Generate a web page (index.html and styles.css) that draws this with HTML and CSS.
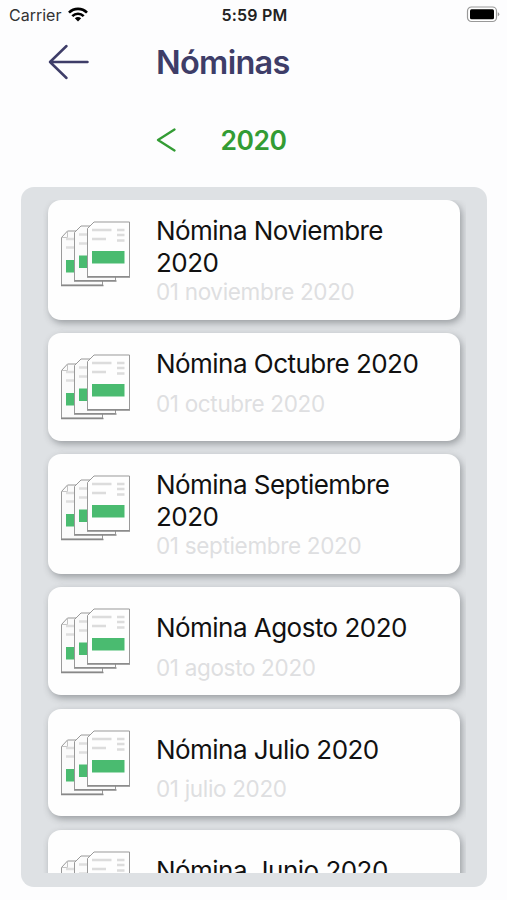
FILE: index.html
```html
<!DOCTYPE html>
<html lang="es">
<head>
<meta charset="utf-8">
<title>Nóminas</title>
<link rel="stylesheet" href="styles.css">
</head>
<body>
<svg class="defs" aria-hidden="true">
  <symbol id="papers" viewBox="0 0 72 70">
    <path d="M1.500 17.500 L7.500 11 H42.500 V65 H1.500 Z" fill="#fbfbfb" stroke="#999"/>
    <path d="M2 17.500 H7.500 V12" fill="none" stroke="#c4c4c4"/>
    <path d="M6 19H15M6 27.500H15" stroke="#dedede" stroke-width="2.500"/>
    <rect x="6" y="40" width="12" height="12.500" fill="#4abb70"/>
    <path d="M1 65.500H43.500" stroke="#888" stroke-width="1.500"/>
    <path d="M14.500 12.500 L21 6 H55.500 V60.500 H14.500 Z" fill="#fbfbfb" stroke="#999"/>
    <path d="M19 14.500H28M19 23.500H28" stroke="#dedede" stroke-width="2.500"/>
    <rect x="19" y="35.500" width="12" height="12.500" fill="#4abb70"/>
    <path d="M14 61H56.500" stroke="#888" stroke-width="1.500"/>
    <path d="M27.500 8.500 L34 2 H69.500 V56.500 H27.500 Z" fill="#fefefe" stroke="#999"/>
    <path d="M32 10H51.500M32 19H46M57 10H64.500M57 15H64.500M57 20.500H64.500" stroke="#dcdcdc" stroke-width="2.700"/>
    <rect x="32" y="31" width="32.500" height="12.500" fill="#4abb70"/>
    <path d="M27 57H70" stroke="#888" stroke-width="1.500"/>
  </symbol>
</svg>
<div class="status">
  <div class="carrier"><span>Carrier</span>
    <svg class="wifi" viewBox="0 0 20 15"><g fill="none" stroke="#000" stroke-width="2.600"><path d="M1 5.700C6 .6 14 .6 19 5.700"/><path d="M4.300 9.200C7.500 6 12.500 6 15.700 9.200"/></g><path d="M10 14.500L6.800 11.300Q10 8.900 13.200 11.300Z"/></svg>
  </div>
  <div class="time">5:59 PM</div>
  <svg class="battery" viewBox="0 0 34 17"><rect x="1.500" y="1" width="29" height="14.500" rx="4" fill="#fff" stroke="#999" stroke-width="1.200"/><rect x="4" y="3.200" width="24" height="10" rx="1.500"/><path d="M31.800 6.200Q33.300 6.600 33.300 8.200T31.800 10.300Z" fill="#999"/></svg>
</div>
<header class="header">
  <svg class="back" viewBox="0 0 42 36"><path d="M18.500 2L2 18L18.500 34M2 18H39.500" fill="none" stroke="#3e3d68" stroke-width="2.500" stroke-linecap="round" stroke-linejoin="round"/></svg>
  <h1 class="heading">Nóminas</h1>
</header>
<nav class="years">
  <svg class="prev" viewBox="0 0 20 24"><path d="M18.500 1.500L2 12L18.500 22.500" fill="none" stroke="#339c34" stroke-width="2.300" stroke-linecap="round" stroke-linejoin="round"/></svg>
  <span class="year">2020</span>
</nav>
<main class="panel">
  <div class="list">
    <article class="card tall"><svg class="icon"><use href="#papers"/></svg><div class="text"><h2 class="title">Nómina Noviembre<br>2020</h2><p class="date">01 noviembre 2020</p></div></article>
    <article class="card upper"><svg class="icon"><use href="#papers"/></svg><div class="text"><h2 class="title">Nómina Octubre 2020</h2><p class="date">01 octubre 2020</p></div></article>
    <article class="card tall"><svg class="icon"><use href="#papers"/></svg><div class="text"><h2 class="title">Nómina Septiembre<br>2020</h2><p class="date">01 septiembre 2020</p></div></article>
    <article class="card"><svg class="icon"><use href="#papers"/></svg><div class="text"><h2 class="title">Nómina Agosto 2020</h2><p class="date">01 agosto 2020</p></div></article>
    <article class="card"><svg class="icon"><use href="#papers"/></svg><div class="text"><h2 class="title">Nómina Julio 2020</h2><p class="date">01 julio 2020</p></div></article>
    <article class="card"><svg class="icon"><use href="#papers"/></svg><div class="text"><h2 class="title">Nómina Junio 2020</h2></div></article>
  </div>
</main>
</body>
</html>
```
FILE: styles.css
```css
* { box-sizing: border-box; }
body {
  margin: 0;
  height: 900px;
  overflow: hidden;
  background: #fdfdfe;
  font-family: Inter, "Liberation Sans", sans-serif;
  color: #111;
}
h1, h2, p { margin: 0; font-weight: 400; }
.defs { display: none; }
.status {
  display: grid;
  grid-template-columns: 1fr auto 1fr;
  align-items: center;
  height: 30px;
  padding: 0 7px 0 9px;
}
.carrier { display: flex; align-items: center; gap: 7px; font-size: 16px; color: #333; }
.wifi { width: 20px; height: 15px; margin-top: -2px; }
.time { margin-top: -1px; font-size: 16px; font-weight: 600; letter-spacing: .2px; color: #222; }
.battery { width: 34px; height: 17px; justify-self: end; margin-top: -2px; }
.header { display: flex; align-items: center; height: 64px; padding-left: 48px; }
.back { width: 42px; height: 36px; }
.heading {
  margin-left: 66px;
  padding-top: 2px;
  font-size: 32.500px;
  font-weight: 600;
  line-height: 40px;
  letter-spacing: -.7px;
  color: #3e3d68;
}
.years { display: flex; align-items: center; height: 93px; padding: 0 0 2px 156px; }
.prev { width: 20px; height: 24px; }
.year { margin-left: 44.500px; font-size: 26.500px; font-weight: 600; line-height: 32px; letter-spacing: -.5px; color: #339c34; }
.panel {
  width: 465.500px;
  height: 699.500px;
  margin-left: 21.300px;
  padding: 13px 21px 13.500px 21.700px;
  border-radius: 13px;
  background: #dee1e4;
}
.list {
  display: flex;
  flex-direction: column;
  gap: 13.500px;
  height: 673px;
  padding: 0 5px;
  overflow: hidden;
}
.card {
  display: flex;
  flex: none;
  width: 412px;
  height: 107.800px;
  padding: 20px 0 0 12px;
  border-radius: 13px;
  background: #fefefe;
  box-shadow: 2px 3px 7px rgba(70, 75, 80, .45);
}
.card.tall { height: 119.500px; }
.icon { width: 72px; height: 70px; flex: none; }
.text { margin-left: 24px; padding-top: 5px; white-space: nowrap; }
.tall .text, .upper .text { margin-top: -10px; }
.title { font-size: 26px; line-height: 31.500px; letter-spacing: -.53px; }
.date { margin-top: 10px; font-size: 22.500px; line-height: 28px; letter-spacing: -.33px; color: #dedfe1; }
.tall .date { margin-top: 0; }
```
